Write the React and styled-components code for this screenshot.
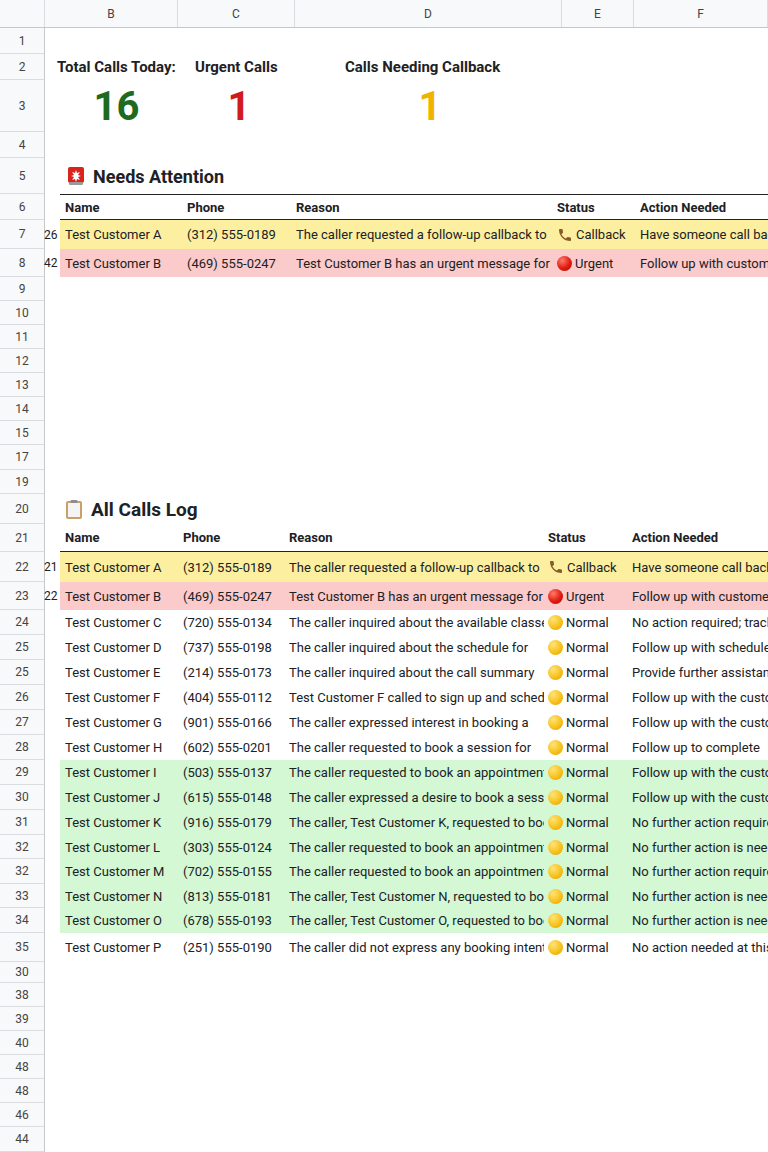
import React from 'react'
import styled, { createGlobalStyle } from 'styled-components'

const Global = createGlobalStyle`
  body { margin: 0; background: #fff; font-family: Roboto, "Liberation Sans", sans-serif; color: #202124; }
  * { box-sizing: border-box; }
`

const Sheet = styled.div`
  width: 768px;
  height: 1152px;
  overflow: hidden;
  display: flex;
  flex-direction: column;
`

const ColHeader = styled.div`
  display: flex;
  height: 28px;
  background: #f8f9fa;
  border-bottom: 1px solid #c7c7c7;
  flex-shrink: 0;
`

const ColLetter = styled.div`
  width: ${p => p.w}px;
  flex-shrink: 0;
  border-right: 1px solid #dadce0;
  display: flex;
  align-items: center;
  justify-content: center;
  font-size: 12px;
  color: #444;
`

const Row = styled.div`
  display: flex;
  height: ${p => p.h}px;
  flex-shrink: 0;
`

const RowNum = styled.div`
  width: 45px;
  flex-shrink: 0;
  background: #f8f9fa;
  border-right: 1px solid #c7c7c7;
  border-bottom: 1px solid #dadce0;
  display: flex;
  align-items: center;
  justify-content: center;
  font-size: 12px;
  color: #444;
`

const Body = styled.div`
  flex: 1;
  display: flex;
  align-items: center;
  min-width: 0;
`

const StatLabel = styled.div`
  width: ${p => p.w}px;
  padding-left: ${p => p.pl || 0}px;
  font-weight: 700;
  font-size: 15px;
  white-space: nowrap;
`

const StatValue = styled.div`
  width: ${p => p.w}px;
  text-align: center;
  font-weight: 700;
  font-size: 40px;
  color: ${p => p.c};
`

const Title = styled.div`
  display: flex;
  align-items: center;
  gap: 8px;
  padding-left: ${p => p.pl}px;
  font-weight: 700;
  font-size: ${p => p.fs}px;
`

const TableRow = styled.div`
  flex: 1;
  align-self: stretch;
  display: flex;
  align-items: center;
  margin-left: 15px;
  background: ${p => p.bg || 'transparent'};
  border-bottom: ${p => (p.head ? '1px solid #222' : 'none')};
  border-top: ${p => (p.top ? '1px solid #222' : 'none')};
  position: relative;
  font-size: 13px;
  font-weight: ${p => (p.head ? 700 : 400)};
`

const Prefix = styled.span`
  position: absolute;
  left: -16px;
  font-size: 12px;
`

const Cell = styled.div`
  width: ${p => p.w}px;
  flex-shrink: 0;
  padding-left: ${p => p.pl}px;
  padding-right: 4px;
  white-space: nowrap;
  overflow: hidden;
  display: flex;
  align-items: center;
  gap: 3px;
`

const Dot = styled.span`
  width: 15px;
  height: 15px;
  border-radius: 50%;
  flex-shrink: 0;
  background: ${p =>
    p.red
      ? 'radial-gradient(circle at 35% 30%, #ff7a6a, #e01b10 55%, #a30d05)'
      : 'radial-gradient(circle at 35% 30%, #ffe27a, #f7c21c 55%, #e09a00)'};
`

const PhoneIcon = () => (
  <svg width="16" height="16" viewBox="0 0 24 24">
    <path fill="#8a5a2b" d="M6.6 10.8c1.4 2.8 3.8 5.1 6.6 6.6l2.2-2.2c.3-.3.7-.4 1-.2 1.1.4 2.3.6 3.6.6.6 0 1 .4 1 1V20c0 .6-.4 1-1 1C10.6 21 3 13.4 3 4c0-.6.4-1 1-1h3.5c.6 0 1 .4 1 1 0 1.3.2 2.5.6 3.6.1.3 0 .7-.2 1L6.6 10.8z" />
  </svg>
)

const Siren = () => (
  <svg width="18" height="20" viewBox="0 0 18 20">
    <rect x="1" y="1" width="16" height="16" rx="2" fill="#d9231b" />
    <rect x="2" y="16" width="14" height="3" rx="1" fill="#9b9b9b" />
    <path fill="#fff" d="M9 4l1 3 3-1-2 3 3 1-3 1 2 3-3-1-1 3-1-3-3 1 2-3-3-1 3-1-2-3 3 1z" />
  </svg>
)

const Clipboard = () => (
  <svg width="18" height="21" viewBox="0 0 18 21">
    <rect x="1" y="2" width="16" height="18" rx="2" fill="#c9a06a" />
    <rect x="3" y="4" width="12" height="14" fill="#f4f4f4" />
    <rect x="5.5" y="1" width="7" height="3" rx="1" fill="#8d8d8d" />
  </svg>
)

const Status = ({ s }) => (
  <>
    {s === 'Callback' ? <PhoneIcon /> : <Dot red={s === 'Urgent'} />}
    {s}
  </>
)

const attnCols = [
  { w: 120, pl: 5 },
  { w: 112, pl: 7 },
  { w: 260, pl: 4 },
  { w: 84, pl: 5 },
  { w: 140, pl: 4 },
]
const logCols = [
  { w: 118, pl: 5 },
  { w: 108, pl: 5 },
  { w: 258, pl: 3 },
  { w: 84, pl: 4 },
  { w: 140, pl: 4 },
]

const YEL = '#fcef9f'
const PINK = '#fbcaca'
const GREEN = '#d3f8d3'

const attn = [
  ['26', 'Test Customer A', '(312) 555-0189', 'The caller requested a follow-up callback to', 'Callback', 'Have someone call back', YEL],
  ['42', 'Test Customer B', '(469) 555-0247', 'Test Customer B has an urgent message for', 'Urgent', 'Follow up with customer', PINK],
]

const log = [
  ['22', 30, '21', 'Test Customer A', '(312) 555-0189', 'The caller requested a follow-up callback to', 'Callback', 'Have someone call back', YEL],
  ['23', 28, '22', 'Test Customer B', '(469) 555-0247', 'Test Customer B has an urgent message for', 'Urgent', 'Follow up with customer', PINK],
  ['24', 25, '', 'Test Customer C', '(720) 555-0134', 'The caller inquired about the available classes', 'Normal', 'No action required; tracked'],
  ['25', 25, '', 'Test Customer D', '(737) 555-0198', 'The caller inquired about the schedule for', 'Normal', 'Follow up with schedule'],
  ['25', 25, '', 'Test Customer E', '(214) 555-0173', 'The caller inquired about the call summary', 'Normal', 'Provide further assistance'],
  ['26', 25, '', 'Test Customer F', '(404) 555-0112', 'Test Customer F called to sign up and schedule', 'Normal', 'Follow up with the customer'],
  ['27', 25, '', 'Test Customer G', '(901) 555-0166', 'The caller expressed interest in booking a', 'Normal', 'Follow up with the customer'],
  ['28', 25, '', 'Test Customer H', '(602) 555-0201', 'The caller requested to book a session for', 'Normal', 'Follow up to complete'],
  ['29', 25, '', 'Test Customer I', '(503) 555-0137', 'The caller requested to book an appointment', 'Normal', 'Follow up with the customer', GREEN],
  ['30', 25, '', 'Test Customer J', '(615) 555-0148', 'The caller expressed a desire to book a session', 'Normal', 'Follow up with the customer', GREEN],
  ['31', 25, '', 'Test Customer K', '(916) 555-0179', 'The caller, Test Customer K, requested to book', 'Normal', 'No further action required', GREEN],
  ['32', 24, '', 'Test Customer L', '(303) 555-0124', 'The caller requested to book an appointment', 'Normal', 'No further action is needed', GREEN],
  ['32', 25, '', 'Test Customer M', '(702) 555-0155', 'The caller requested to book an appointment', 'Normal', 'No further action required', GREEN],
  ['33', 24, '', 'Test Customer N', '(813) 555-0181', 'The caller, Test Customer N, requested to book', 'Normal', 'No further action is needed', GREEN],
  ['34', 25, '', 'Test Customer O', '(678) 555-0193', 'The caller, Test Customer O, requested to book', 'Normal', 'No further action is needed', GREEN],
  ['35', 29, '', 'Test Customer P', '(251) 555-0190', 'The caller did not express any booking intent', 'Normal', 'No action needed at this time'],
]

const emptyMid = [['9', 24], ['10', 24], ['11', 24], ['12', 24], ['13', 24], ['14', 24], ['15', 24], ['17', 25], ['19', 24]]
const emptyEnd = [['30', 21], ['38', 24], ['39', 24], ['40', 24], ['48', 24], ['48', 24], ['46', 24], ['44', 25]]

const Cells = ({ cols, vals }) =>
  vals.map((v, i) => (
    <Cell key={i} w={cols[i].w} pl={cols[i].pl}>
      {i === 3 && v !== 'Status' ? <Status s={v} /> : v}
    </Cell>
  ))

const head = ['Name', 'Phone', 'Reason', 'Status', 'Action Needed']

export default function App() {
  return (
    <Sheet>
      <Global />
      <ColHeader>
        <ColLetter w={45} />
        <ColLetter w={133}>B</ColLetter>
        <ColLetter w={117}>C</ColLetter>
        <ColLetter w={267}>D</ColLetter>
        <ColLetter w={72}>E</ColLetter>
        <ColLetter w={134}>F</ColLetter>
      </ColHeader>
      <Row h={26}><RowNum>1</RowNum><Body /></Row>
      <Row h={26}>
        <RowNum>2</RowNum>
        <Body>
          <StatLabel w={150} pl={12}>Total Calls Today:</StatLabel>
          <StatLabel w={150}>Urgent Calls</StatLabel>
          <StatLabel w={200}>Calls Needing Callback</StatLabel>
        </Body>
      </Row>
      <Row h={52}>
        <RowNum>3</RowNum>
        <Body>
          <StatValue w={143} c="#1e6b1e">16</StatValue>
          <StatValue w={102} c="#d11a1a">1</StatValue>
          <StatValue w={280} c="#f0b400">1</StatValue>
        </Body>
      </Row>
      <Row h={26}><RowNum>4</RowNum><Body /></Row>
      <Row h={36}>
        <RowNum>5</RowNum>
        <Body><Title pl={22} fs={18}><Siren />Needs Attention</Title></Body>
      </Row>
      <Row h={26}>
        <RowNum>6</RowNum>
        <Body><TableRow head top><Cells cols={attnCols} vals={head} /></TableRow></Body>
      </Row>
      {attn.map((r, i) => (
        <Row h={i ? 28 : 29} key={i}>
          <RowNum>{7 + i}</RowNum>
          <Body>
            <TableRow bg={r[6]}>
              <Prefix>{r[0]}</Prefix>
              <Cells cols={attnCols} vals={r.slice(1, 6)} />
            </TableRow>
          </Body>
        </Row>
      ))}
      {emptyMid.map(([n, h], i) => (
        <Row h={h} key={'m' + i}><RowNum>{n}</RowNum><Body /></Row>
      ))}
      <Row h={30}>
        <RowNum>20</RowNum>
        <Body><Title pl={20} fs={19}><Clipboard />All Calls Log</Title></Body>
      </Row>
      <Row h={28}>
        <RowNum>21</RowNum>
        <Body><TableRow head><Cells cols={logCols} vals={head} /></TableRow></Body>
      </Row>
      {log.map((r, i) => (
        <Row h={r[1]} key={'l' + i}>
          <RowNum>{r[0]}</RowNum>
          <Body>
            <TableRow bg={r[8]}>
              {r[2] && <Prefix>{r[2]}</Prefix>}
              <Cells cols={logCols} vals={r.slice(3, 8)} />
            </TableRow>
          </Body>
        </Row>
      ))}
      {emptyEnd.map(([n, h], i) => (
        <Row h={h} key={'e' + i}><RowNum>{n}</RowNum><Body /></Row>
      ))}
    </Sheet>
  )
}
